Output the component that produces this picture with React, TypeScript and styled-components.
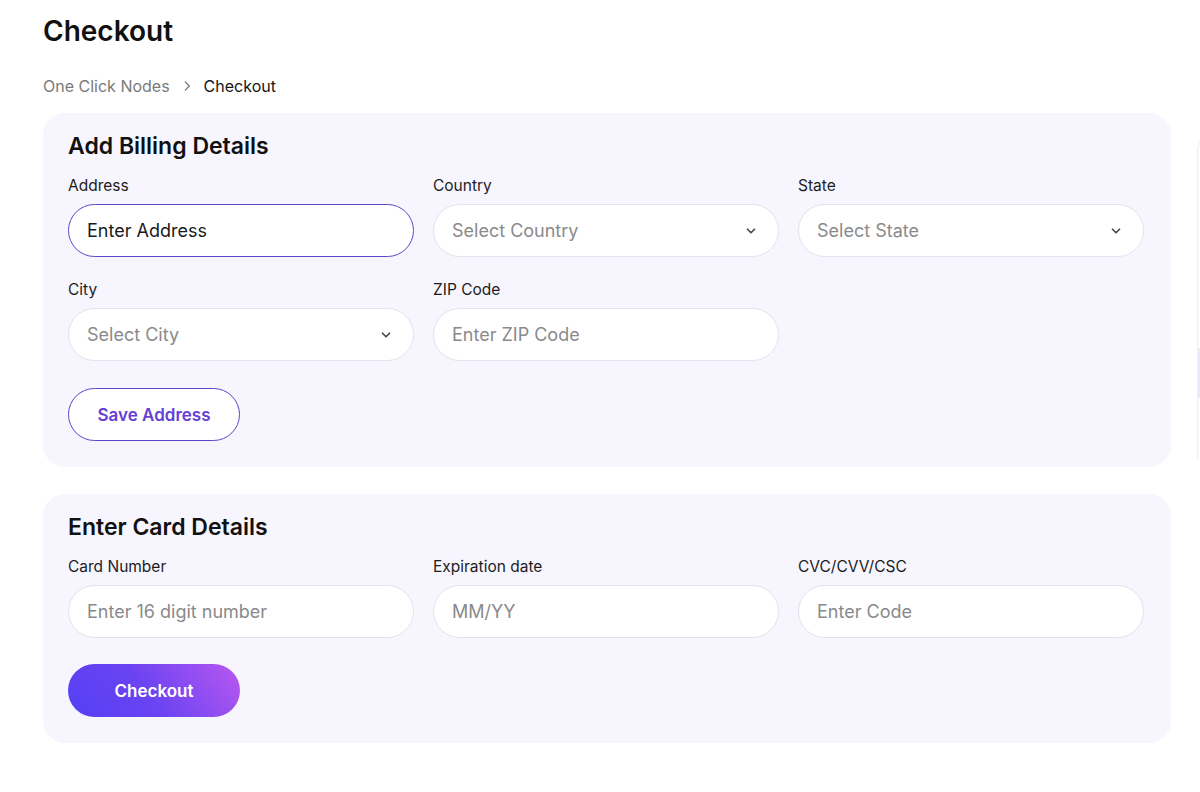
import { FC } from "react";
import styled, { createGlobalStyle } from "styled-components";

const GlobalStyle = createGlobalStyle`
  html, body {
    margin: 0;
    padding: 0;
    background: #ffffff;
  }
  body {
    font-family: "Inter", "Open Sans", sans-serif;
    color: #161616;
    overflow: hidden;
  }
`;

const Page = styled.div`
  display: flex;
  gap: 26px;
  width: 1200px;
  height: 792px;
  padding: 14px 0 0 43px;
  box-sizing: border-box;
  overflow: hidden;
`;

const Main = styled.main`
  flex: 0 0 1128px;
  display: flex;
  flex-direction: column;
`;

const PageTitle = styled.h1`
  margin: 0;
  font-size: 28px;
  line-height: 34px;
  font-weight: 600;
  color: #111;
`;

const Breadcrumb = styled.nav`
  margin-top: 28px;
  display: flex;
  align-items: center;
  gap: 10px;
  font-size: 16px;
  line-height: 20px;
`;

const Crumb = styled.span<{ $active?: boolean }>`
  color: ${(p) => (p.$active ? "#161616" : "#7a7a7a")};
`;

const Card = styled.section`
  background: #f7f5fe;
  border-radius: 22px;
  padding: 18px 27px 26px 25px;
  display: flex;
  flex-direction: column;
  & + & {
    margin-top: 27px;
  }
`;

const CardTitle = styled.h2`
  margin: 0 0 15px;
  font-size: 23px;
  line-height: 30px;
  font-weight: 600;
  color: #111;
`;

const Grid = styled.div`
  display: grid;
  grid-template-columns: repeat(3, 346px);
  column-gap: 19px;
  row-gap: 23px;
`;

const Field = styled.div`
  display: flex;
  flex-direction: column;
  gap: 8px;
`;

const Label = styled.label`
  font-size: 15.5px;
  line-height: 20px;
  color: #1c1c1c;
`;

const Box = styled.div<{ $focused?: boolean }>`
  height: 53px;
  box-sizing: border-box;
  border-radius: 27px;
  background: #fff;
  border: ${(p) => (p.$focused ? "1.5px solid #5a48c8" : "1px solid #e4e1ec")};
  display: flex;
  align-items: center;
  justify-content: space-between;
  padding: 0 20px 0 18px;
  font-size: 18px;
`;

const BoxText = styled.span<{ $filled?: boolean }>`
  color: ${(p) => (p.$filled ? "#1a1a1a" : "#8a8a8a")};
`;

const Chevron = styled.svg`
  width: 14px;
  height: 14px;
  color: #4a4a4a;
`;

const OutlineButton = styled.button`
  margin-top: 27px;
  align-self: flex-start;
  width: 172px;
  height: 53px;
  border-radius: 27px;
  border: 1.5px solid #5b46c9;
  background: #fff;
  color: #6540d2;
  font-family: inherit;
  font-size: 17px;
  font-weight: 600;
`;

const GradientButton = styled.button`
  margin-top: 26px;
  align-self: flex-start;
  width: 172px;
  height: 53px;
  border-radius: 27px;
  border: none;
  background: linear-gradient(55deg, #5540f4 0%, #6a43f2 45%, #b958f0 100%);
  color: #fff;
  font-family: inherit;
  font-size: 17px;
  font-weight: 600;
`;

const Side = styled.aside`
  flex: 0 0 300px;
  margin-top: 116px;
  height: 330px;
  border-left: 1px solid #f1eefb;
  border-top: 1px solid #f4f2fc;
  border-radius: 22px 0 0 0;
  background: #fefefe;
  display: flex;
  flex-direction: column;
  justify-content: flex-end;
  padding-bottom: 62px;
  box-sizing: border-box;
`;

const SideBar = styled.div`
  height: 50px;
  width: 100%;
  background: #ebe8fb;
`;

const ChevronIcon: FC = () => (
  <Chevron viewBox="0 0 24 24" fill="none" stroke="currentColor" strokeWidth={3} strokeLinecap="round" strokeLinejoin="round">
    <path d="M6 9l6 6 6-6" />
  </Chevron>
);

interface InputProps {
  label: string;
  text: string;
  select?: boolean;
  filled?: boolean;
}

const Input: FC<InputProps> = ({ label, text, select, filled }) => (
  <Field>
    <Label>{label}</Label>
    <Box $focused={filled}>
      <BoxText $filled={filled}>{text}</BoxText>
      {select && <ChevronIcon />}
    </Box>
  </Field>
);

const App: FC = () => {
  return (
    <>
      <GlobalStyle />
      <Page>
        <Main>
          <PageTitle>Checkout</PageTitle>
          <Breadcrumb>
            <Crumb>One Click Nodes</Crumb>
            <svg width="14" height="14" viewBox="0 0 24 24" fill="none" stroke="#6f6f6f" strokeWidth={2} strokeLinecap="round" strokeLinejoin="round">
              <path d="M9 5l7 7-7 7" />
            </svg>
            <Crumb $active>Checkout</Crumb>
          </Breadcrumb>
          <div style={{ height: 17 }} />
          <Card>
            <CardTitle>Add Billing Details</CardTitle>
            <Grid>
              <Input label="Address" text="Enter Address" filled />
              <Input label="Country" text="Select Country" select />
              <Input label="State" text="Select State" select />
              <Input label="City" text="Select City" select />
              <Input label="ZIP Code" text="Enter ZIP Code" />
            </Grid>
            <OutlineButton>Save Address</OutlineButton>
          </Card>
          <Card>
            <CardTitle>Enter Card Details</CardTitle>
            <Grid>
              <Input label="Card Number" text="Enter 16 digit number" />
              <Input label="Expiration date" text="MM/YY" />
              <Input label="CVC/CVV/CSC" text="Enter Code" />
            </Grid>
            <GradientButton>Checkout</GradientButton>
          </Card>
        </Main>
        <Side>
          <SideBar />
        </Side>
      </Page>
    </>
  );
};

export default App;
